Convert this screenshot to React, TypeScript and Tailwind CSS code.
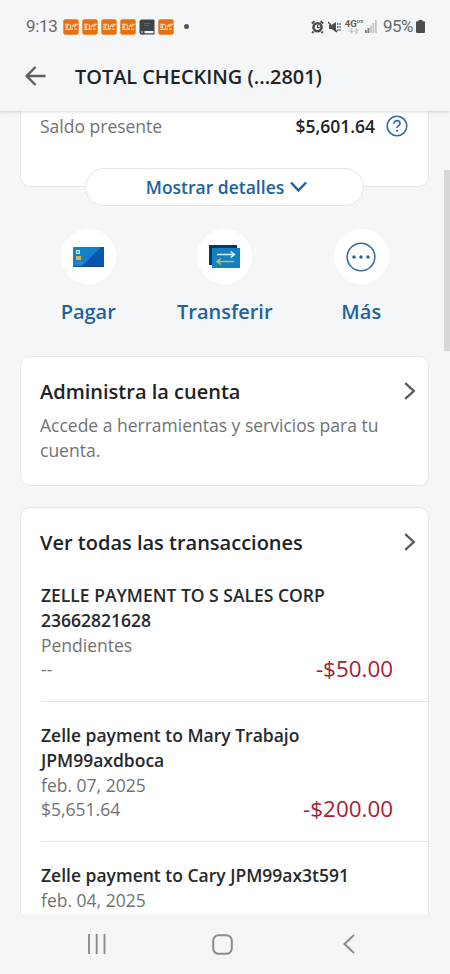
import type { ReactNode } from "react";

function AppBadge() {
  return (
    <svg width="16" height="16" viewBox="0 0 16 16">
      <rect x="0.300" y="0.300" width="15.400" height="15.400" rx="2" fill="#e8700f" />
      <g stroke="#f8cda3" strokeWidth="1.300" fill="none">
        <path d="M2 5.500h4.500M2 8h3M2 10.300h5M4.200 5v5M7.500 5.500v4.500h2.500M9 8l2-2.500M11.500 5.500h2.500L11 8M11 10.200h3" />
      </g>
    </svg>
  );
}

function BookIcon() {
  return (
    <svg width="16" height="16" viewBox="0 0 16 16">
      <path d="M3 .5h11.500a1 1 0 0 1 1 1V15.500H2.500a2 2 0 0 1-2-2V3A2.500 2.500 0 0 1 3 .5Z" fill="#3d4347" />
      <path d="M2.500 12h12v2.300h-12z" fill="#f0f1f2" />
      <path d="M5 4.500h7M5 6.500h5" stroke="#636a6e" strokeWidth=".8" />
      <path d="M3.500 12h2v4l-1-1-1 1z" fill="#3d4347" />
    </svg>
  );
}

function StatusBar() {
  return (
    <div className="flex h-[53px] items-center pl-[26px] pr-[25px] font-['Roboto',sans-serif] text-[17px] text-[#66696c]">
      <span className="w-[37px] tracking-[-0.300px]">9:13</span>
      <div className="flex gap-[3px]">
        <AppBadge />
        <AppBadge />
        <AppBadge />
        <AppBadge />
        <BookIcon />
        <AppBadge />
      </div>
      <span className="ml-[10px] size-[5px] rounded-full bg-[#55585a]" />
      <svg className="ml-auto" width="13" height="14" viewBox="0 0 13 14">
        <circle cx="6.500" cy="7.300" r="5.300" fill="#4c4f52" />
        <path d="M.8 3.500 3.500 1.200M12.200 3.500 9.500 1.200M2.500 11.500l-1.300 1.500M10.500 11.500l1.300 1.500" stroke="#4c4f52" strokeWidth="2" />
        <circle cx="6.500" cy="7.300" r="2.700" fill="#f5f6f8" />
        <path d="M6.500 5v2.600h2.200" stroke="#4c4f52" strokeWidth="1.200" fill="none" />
      </svg>
      <svg className="ml-[4px]" width="13" height="14" viewBox="0 0 13 14">
        <path d="M1 5h2.500L8 2v10L3.500 9H1z" fill="#4c4f52" />
        <path d="M0 2 9 12" stroke="#4c4f52" strokeWidth="1.500" />
        <path d="M9.800 3v8M12 3v8" stroke="#5c5f62" strokeWidth="1.200" strokeDasharray="2 1" />
      </svg>
      <div className="ml-[4px] flex h-[15px] w-[18px] flex-col items-center">
        <div className="flex items-start">
          <span className="text-[9.500px] leading-[9px] font-bold text-[#5c5f62]">4G</span>
          <span className="text-[4px] leading-[5px] font-bold">LTE</span>
        </div>
        <svg width="10" height="6" viewBox="0 0 10 6" fill="#c9cbcd">
          <path d="M2.500 6 0 3h1.500V0h2v3H5zM7.500 0 5 3h1.500v3h2V3H10z" />
        </svg>
      </div>
      <svg className="ml-[2px]" width="12" height="13" viewBox="0 0 12 13">
        <path d="M0 10h1.800v3H0zM2.500 8h1.800v5H2.500z" fill="#77797c" />
        <path d="M5 5.500h1.800V13H5zM7.500 3h1.800v10H7.500zM10 0h1.800v13H10z" fill="#c3c5c7" />
      </svg>
      <span className="ml-[6px] tracking-[-0.500px]">95%</span>
      <svg className="ml-[3px]" width="9" height="13" viewBox="0 0 9 13" fill="#4c4f52">
        <path d="M2.500 0h4v1.200H8a1 1 0 0 1 1 1V12a1 1 0 0 1-1 1H1a1 1 0 0 1-1-1V2.200a1 1 0 0 1 1-1h1.500z" />
      </svg>
    </div>
  );
}

function ChevronRight() {
  return (
    <svg width="12" height="18" viewBox="0 0 12 18" fill="none" stroke="#56595c" strokeWidth="2.300">
      <path d="m1.200 1.200 8.600 7.800-8.600 7.800" />
    </svg>
  );
}

function Action({ label, children }: { label: string; children: ReactNode }) {
  return (
    <div className="flex w-[136.500px] flex-col items-center">
      <div className="flex size-[55px] items-center justify-center rounded-full bg-white">{children}</div>
      <span className="mt-[14px] text-[20px] leading-[28px] font-semibold text-[#21629b]">{label}</span>
    </div>
  );
}

type Transaction = { title: string[]; status: string; balance?: string; amount?: string };

const transactions: Transaction[] = [
  { title: ["ZELLE PAYMENT TO S SALES CORP", "23662821628"], status: "Pendientes", balance: "--", amount: "-$50.00" },
  { title: ["Zelle payment to Mary Trabajo", "JPM99axdboca"], status: "feb. 07, 2025", balance: "$5,651.64", amount: "-$200.00" },
  { title: ["Zelle payment to Cary JPM99ax3t591"], status: "feb. 04, 2025" },
];

function TransactionRow({ item }: { item: Transaction }) {
  return (
    <div className="ml-[20px] h-[140px] border-b border-[#e4e5e7] pt-[21px] text-[17.500px] leading-[25px]">
      {item.title.map((line) => (
        <div key={line} className="font-semibold whitespace-nowrap text-[#26292b]">{line}</div>
      ))}
      <div className="leading-[24px] text-[#707274]">{item.status}</div>
      <div className="flex h-[24px] items-center justify-between pr-[35px] text-[#707274]">
        <span>{item.balance}</span>
        <span className="pb-px text-[22.400px] text-[#a62231]">{item.amount}</span>
      </div>
    </div>
  );
}

export default function App() {
  return (
    <div className="flex h-[974px] w-[450px] flex-col overflow-hidden bg-[#f5f6f8] font-['Open_Sans',sans-serif]">
      <header className="relative z-10 h-[111px] shrink-0 bg-[#f5f6f8] shadow-[0_1px_3px_rgba(0,0,0,0.16)]">
        <StatusBar />
        <div className="flex h-[46px] items-center pl-[25px]">
          <svg width="21" height="20" viewBox="0 0 21 20" fill="none" stroke="#5c5f62" strokeWidth="2.400">
            <path d="M20.500 10H2M10.500 1 1.700 10l8.800 9" />
          </svg>
          <h1 className="ml-[29px] pt-px text-[19.900px] font-semibold whitespace-nowrap text-[#202325]">TOTAL CHECKING (...2801)</h1>
        </div>
      </header>

      <main className="relative h-[803px] shrink-0 overflow-hidden px-[20px]">
        <section className="h-[76px] w-[409px] rounded-b-[10px] border border-t-0 border-[#e6e7e9] bg-white">
          <div className="flex h-[29px] items-center pl-[19px] pr-[20px] text-[17.500px]">
            <span className="pt-px text-[#707274]">Saldo presente</span>
            <span className="ml-auto pt-px font-semibold text-[#202325]">$5,601.64</span>
            <svg className="ml-[11px]" width="22" height="22" viewBox="0 0 22 22" fill="none" stroke="#326e9a">
              <circle cx="11" cy="11" r="9.800" strokeWidth="1.600" />
              <path d="M8 8.700c0-1.800 1.200-3 3-3s3 1.200 3 2.700c0 2.200-3 2.300-3 4.600" strokeWidth="1.700" />
              <path d="M11 14.800v2" strokeWidth="1.800" />
            </svg>
          </div>
        </section>
        <div className="relative -mt-[19px] ml-[65px] flex h-[38px] w-[279px] items-center justify-center gap-[6px] rounded-full border border-[#e4e5e7] bg-white pl-[4px] text-[17.500px] font-semibold text-[#21629b]">
          <span className="pt-px">Mostrar detalles</span>
          <svg width="17" height="12" viewBox="0 0 17 12" fill="none" stroke="#21629b" strokeWidth="2.500">
            <path d="m1 1.500 7.500 8 7.500-8" />
          </svg>
        </div>

        <div className="mt-[23px] flex h-[98px]">
          <Action label="Pagar">
            <svg width="31" height="20" viewBox="0 0 31 20">
              <rect width="31" height="20" rx="1" fill="#1380c8" />
              <path d="M28 0h3v20H8z" fill="#0755ad" />
              <path d="M0 19h31v1H0z" fill="#174d89" />
              <rect x="3.500" y="3.500" width="3" height="3" fill="#4aa6d7" stroke="#c2e9f6" />
              <rect x="3" y="9" width="5" height="4" fill="#d0b64b" />
              <path d="M3 16h7" stroke="#3b9ace" />
            </svg>
          </Action>
          <Action label="Transferir">
            <svg width="31" height="23" viewBox="0 0 31 23">
              <path d="M0 0h28v20H0z" fill="#07366b" />
              <path d="M3 3h28v20H3z" fill="#137fc0" />
              <path d="M8 9.500h17M21.500 6.500l4 3-4 3" fill="none" stroke="#d6f3ff" strokeWidth="1.500" />
              <path d="M25 16.500H8M12 13.500l-4 3 4 3" fill="none" stroke="#c6bb58" strokeWidth="1.500" />
            </svg>
          </Action>
          <Action label="Más">
            <svg width="30" height="30" viewBox="0 0 30 30">
              <circle cx="15" cy="15" r="13.800" fill="none" stroke="#326e9a" strokeWidth="1.600" />
              <g fill="#21629b">
                <circle cx="8" cy="15" r="1.700" />
                <circle cx="15" cy="15" r="1.700" />
                <circle cx="22" cy="15" r="1.700" />
              </g>
            </svg>
          </Action>
        </div>

        <section className="mt-[29px] h-[130px] w-[409px] rounded-[10px] border border-[#e6e7e9] bg-white pt-[20px] pr-[12px] pl-[19px]">
          <div className="flex h-[28px] items-center justify-between">
            <h2 className="pt-[2px] text-[20px] font-semibold text-[#202325]">Administra la cuenta</h2>
            <ChevronRight />
          </div>
          <p className="mt-[8px] text-[17.500px] leading-[25px] whitespace-nowrap text-[#707274]">
            Accede a herramientas y servicios para tu
            <br />
            cuenta.
          </p>
        </section>

        <section className="mt-[21px] h-[500px] w-[409px] rounded-[10px] border border-[#e6e7e9] bg-white">
          <div className="mt-[20px] flex h-[28px] items-center justify-between pl-[19px] pr-[12px]">
            <h2 className="pt-[2px] text-[20px] font-semibold text-[#202325]">Ver todas las transacciones</h2>
            <ChevronRight />
          </div>
          <div className="mt-[6px]">
            {transactions.map((item) => (
              <TransactionRow key={item.title[0]} item={item} />
            ))}
          </div>
        </section>
        <div className="absolute top-[59px] right-0 h-[181px] w-[6px] bg-[#d7d8d9]" />
      </main>

      <nav className="flex h-[60px] shrink-0 items-center bg-[#f5f5f5] pl-[87px] text-[#8b8b8b]">
        <svg width="19" height="20" viewBox="0 0 19 20" stroke="currentColor" strokeWidth="1.900">
          <path d="M2 0v20M9.700 0v20M17.500 0v20" />
        </svg>
        <svg className="ml-[106px]" width="21" height="21" viewBox="0 0 21 21" fill="none" stroke="currentColor" strokeWidth="2">
          <rect x="1.200" y="1.200" width="18.600" height="18.600" rx="5.500" />
        </svg>
        <svg className="ml-[110px]" width="12" height="20" viewBox="0 0 12 20" fill="none" stroke="currentColor" strokeWidth="2">
          <path d="m11 1-9.500 9 9.500 9" />
        </svg>
      </nav>
    </div>
  );
}
